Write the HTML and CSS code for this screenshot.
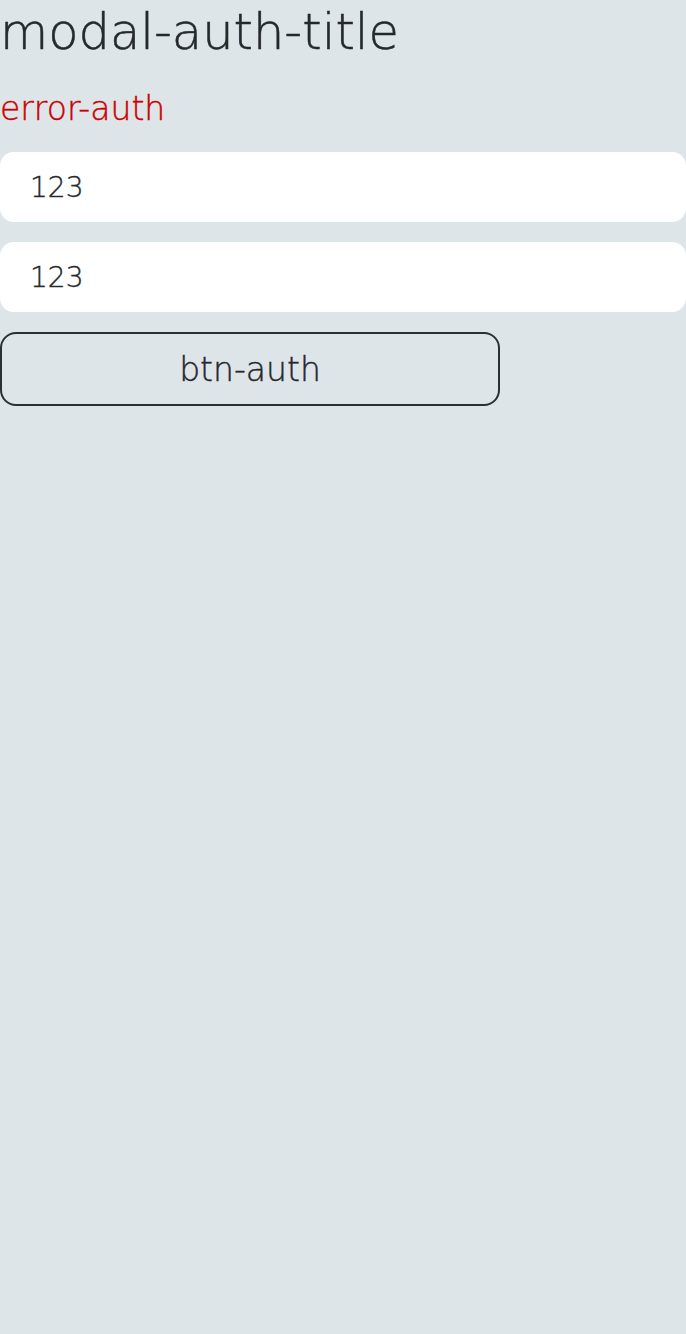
FILE: index.html
```html
<!DOCTYPE html>
<html>
<head>
<meta charset="utf-8">
<link rel="stylesheet" href="styles.css">
</head>
<body>
<div class="modal-auth">
  <h2 class="modal-auth-title">modal-auth-title</h2>
  <p class="error-auth">error-auth</p>
  <form class="auth-form">
    <input class="auth-input" type="text" value="123">
    <input class="auth-input" type="text" value="123">
    <button class="btn-auth" type="button">btn-auth</button>
  </form>
</div>
</body>
</html>
```
FILE: styles.css
```css
html, body {
  margin: 0;
  padding: 0;
  background: #dee5e8;
  min-height: 100%;
}
body {
  font-family: "DejaVu Sans", sans-serif;
  font-weight: 300;
  color: #25292b;
}
.modal-auth {
  display: flex;
  flex-direction: column;
}
.modal-auth-title {
  margin: 0;
  font-size: 49.5px;
  font-weight: 300;
  line-height: 64px;
  -webkit-text-stroke: 0.5px currentColor;
}
.error-auth {
  margin: 23px 0 0 0;
  font-size: 33px;
  line-height: 44px;
  color: #cc0000;
  -webkit-text-stroke: 0.4px currentColor;
}
.auth-form {
  display: flex;
  flex-direction: column;
  gap: 20px;
  margin-top: 21px;
}
.auth-input {
  box-sizing: border-box;
  width: 100%;
  height: 70px;
  border: none;
  border-radius: 14px;
  background: #fff;
  padding: 0 30px;
  font-family: inherit;
  font-weight: 300;
  font-size: 28px;
  color: #25292b;
  outline: none;
  -webkit-text-stroke: 0.4px currentColor;
}
.btn-auth {
  box-sizing: border-box;
  width: 500px;
  height: 74px;
  border: 2px solid #2b3035;
  border-radius: 16px;
  background: transparent;
  font-family: inherit;
  font-weight: 300;
  font-size: 33px;
  color: #25292b;
  padding: 0;
  -webkit-text-stroke: 0.4px currentColor;
}
```
